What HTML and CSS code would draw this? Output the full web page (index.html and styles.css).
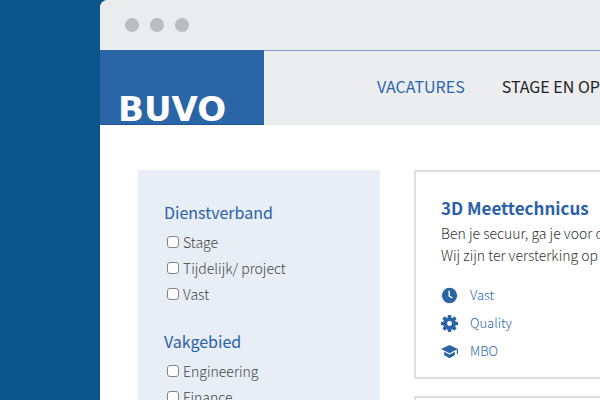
FILE: index.html
```html
<!DOCTYPE html>
<html lang="nl">
<head>
    <meta charset="UTF-8">
    <meta name="viewport" content="width=device-width, initial-scale=1.0">
    <title>BUVO vacatures</title>
    <link rel="stylesheet" href="styles.css">
</head>
<body>
    <div class="browser">
        <div class="browser-bar">
            <span class="dot"></span>
            <span class="dot"></span>
            <span class="dot"></span>
        </div>
        <header class="header">
            <a class="logo" href="#">BUVO</a>
            <nav class="nav">
                <a class="active" href="#">VACATURES</a>
                <a href="#">STAGE EN OPLEIDING</a>
            </nav>
        </header>
        <main class="content">
            <form class="filters">
                <fieldset>
                    <legend>Dienstverband</legend>
                    <label><input type="checkbox">Stage</label>
                    <label><input type="checkbox">Tijdelijk/ project</label>
                    <label><input type="checkbox">Vast</label>
                </fieldset>
                <fieldset>
                    <legend>Vakgebied</legend>
                    <label><input type="checkbox">Engineering</label>
                    <label><input type="checkbox">Finance</label>
                </fieldset>
            </form>
            <div class="jobs">
                <article class="job">
                    <h2>3D Meettechnicus</h2>
                    <p>Ben je secuur, ga je voor de<br>Wij zijn ter versterking op</p>
                    <ul>
                        <li>
                            <svg viewBox="0 0 16 16"><circle cx="8" cy="8" r="7.2" fill="currentColor"/><path d="M7.7 3.6V8.3L10.6 10.4" fill="none" stroke="#fff" stroke-width="1.3"/></svg>
                            Vast
                        </li>
                        <li>
                            <svg viewBox="0 0 16 16"><g fill="currentColor"><rect x="6.3" y="0" width="3.4" height="16" rx="0.7"/><rect x="6.3" y="0" width="3.4" height="16" rx="0.7" transform="rotate(45 8 8)"/><rect x="6.3" y="0" width="3.4" height="16" rx="0.7" transform="rotate(90 8 8)"/><rect x="6.3" y="0" width="3.4" height="16" rx="0.7" transform="rotate(135 8 8)"/><circle cx="8" cy="8" r="6"/></g><circle cx="8" cy="8" r="2.3" fill="#fff"/></svg>
                            Quality
                        </li>
                        <li>
                            <svg viewBox="0 0 16 16"><path d="M8 1.8L0 5.6L8 9.6L14.9 6.2V10.6H16V5.6Z" fill="currentColor"/><path d="M3 8.2V11.6L8 14.4L13 11.6V8.2L8 10.8Z" fill="currentColor"/></svg>
                            MBO
                        </li>
                    </ul>
                </article>
                <article class="job"></article>
            </div>
        </main>
    </div>
</body>
</html>
```
FILE: styles.css
```css
* {
    box-sizing: border-box;
}

body {
    margin: 0;
    padding-left: 100px;
    height: 100vh;
    overflow: hidden;
    background-color: #0a568b;
    font-family: "Noto Sans CJK JP", "Open Sans", sans-serif;
    color: #333;
}

a {
    color: inherit;
    text-decoration: none;
}

.browser {
    height: 100vh;
    background-color: #fff;
    border-top-left-radius: 8px;
    overflow: hidden;
}

.browser-bar {
    display: flex;
    align-items: center;
    gap: 11px;
    height: 50px;
    padding-left: 25px;
    background-color: #ebecee;
}

.dot {
    width: 14px;
    height: 14px;
    border-radius: 50%;
    background-color: #b9bdbe;
}

.header {
    display: flex;
    height: 75px;
    background-color: #ecedef;
    border-top: 1px solid #7b9fc5;
}

.logo {
    display: flex;
    flex: none;
    align-items: flex-end;
    width: 164px;
    margin-top: -1px;
    padding-left: 18px;
    background-color: #2a66a5;
    border-bottom: 1px solid #1f5595;
    color: #fff;
    font-family: "DejaVu Sans", sans-serif;
    font-size: 34px;
    font-weight: bold;
    line-height: 30px;
}

.nav {
    display: flex;
    align-items: center;
    gap: 37px;
    padding: 0 0 4px 113px;
    color: #222;
    font-size: 16px;
    white-space: nowrap;
}

.nav .active {
    color: #2a66ae;
}

.content {
    display: flex;
    gap: 34px;
    padding: 45px 0 0 38px;
}

.filters {
    flex: none;
    width: 242px;
    padding: 29px 26px;
    background-color: #e7eef6;
}

fieldset {
    margin: 0 0 21px;
    padding: 0;
    border: 0;
}

legend {
    padding: 0;
    margin-bottom: 4px;
    color: #2a61a8;
    font-size: 16px;
    font-weight: 400;
    line-height: 26px;
}

label {
    display: flex;
    align-items: center;
    gap: 4px;
    padding-left: 3px;
    color: #444;
    font-size: 14px;
    font-weight: 300;
    line-height: 26px;
}

input {
    appearance: none;
    width: 12px;
    height: 12px;
    margin: 0;
    background-color: #fff;
    border: 1px solid #858585;
    border-radius: 3px;
}

.jobs {
    flex: 1;
    min-width: 0;
}

.job {
    min-height: 100px;
    margin: 0 -20px 17px 0;
    padding: 23px 25px 12px;
    border: 2px solid #dfdfe1;
    white-space: nowrap;
}

.job h2 {
    margin: 0 0 1px;
    color: #2a61a8;
    font-size: 17px;
    font-weight: bold;
    line-height: 26px;
}

.job p {
    margin: 0 0 15px;
    font-size: 14px;
    font-weight: 300;
    line-height: 22px;
}

.job ul {
    margin: 0;
    padding: 0;
    list-style: none;
}

.job li {
    display: flex;
    align-items: center;
    gap: 12px;
    color: #2a66ae;
    font-size: 13px;
    font-weight: 300;
    line-height: 28px;
}

.job svg {
    width: 17px;
    height: 17px;
    color: #2a66a5;
}
```
